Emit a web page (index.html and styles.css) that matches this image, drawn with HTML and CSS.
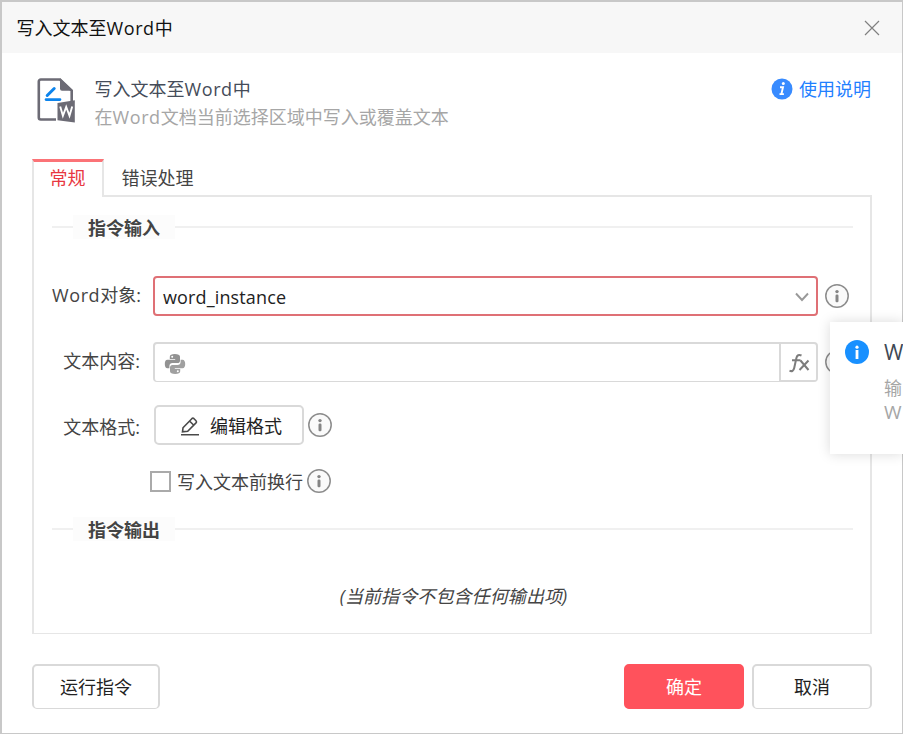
FILE: index.html
```html
<!DOCTYPE html>
<html lang="zh-CN">
<head>
<meta charset="utf-8">
<title>写入文本至Word中</title>
<link rel="stylesheet" href="styles.css">
</head>
<body>
<svg class="defs" aria-hidden="true">
  <symbol id="info" viewBox="0 0 24 24">
    <circle cx="12" cy="12" r="11.2" fill="#fafafa" stroke="#8c8c8c" stroke-width="1.5"/>
    <circle cx="12" cy="7.600" r="1.700" fill="#858585"/>
    <rect x="10.500" y="10.500" width="3" height="7.700" rx="1.200" fill="#858585"/>
  </symbol>
</svg>
<div class="window">
  <header class="titlebar">
    <span class="title">写入文本至<span class="latin">Word</span>中</span>
    <svg class="close" viewBox="0 0 16 16"><path d="M1 1l14 14M15 1L1 15" fill="none" stroke="#808080" stroke-width="1.2"/></svg>
  </header>

  <section class="intro">
    <svg class="doc-icon" viewBox="0 0 40 48">
      <path d="M20 42.500H4.800a2 2 0 0 1-2-2V4.500a2 2 0 0 1 2-2H24L35.700 13.500V26" fill="none" stroke="#6c6b75" stroke-width="2.600"/>
      <path d="M24 1.300L37 13.800H26a2 2 0 0 1-2-2z" fill="#6c6b75"/>
      <path d="M11.200 18.500l7-7" stroke="#0d84ec" stroke-width="3" stroke-linecap="round"/>
      <path d="M10 22.600h14" stroke="#0d84ec" stroke-width="2.600" stroke-linecap="round"/>
      <path d="M21.500 26L38.800 23.300v22.200l-17.300-2.300z" fill="#6c6b75"/>
      <path d="M24.200 29.500l2.700 9.300 3.300-8.800 3.300 8.800 2.700-9.300" fill="none" stroke="#fff" stroke-width="1.900"/>
    </svg>
    <div class="intro-text">
      <div class="name">写入文本至<span class="latin">Word</span>中</div>
      <div class="desc">在<span class="latin">Word</span>文档当前选择区域中写入或覆盖文本</div>
    </div>
    <a class="help">
      <svg viewBox="0 0 22 22"><circle cx="11" cy="11" r="10.500" fill="#388bff"/><circle cx="12.300" cy="5.500" r="1.500" fill="#fff"/><path d="M9 9.200h3l-1.600 6.900h2.500M8.500 16.100h2" fill="none" stroke="#fff" stroke-width="1.900"/></svg>
      <span>使用说明</span>
    </a>
  </section>

  <nav class="tabs">
    <div class="tab active">常规</div>
    <div class="tab">错误处理</div>
  </nav>

  <main class="panel">
    <h2 class="legend"><span>指令输入</span></h2>
    <div class="row row-object">
      <label><span class="latin">Word</span>对象:</label>
      <div class="select"><span class="value">word_instance</span>
        <svg viewBox="0 0 14 10"><path d="M1 1.500l6 6.500 6-6.500" fill="none" stroke="#999" stroke-width="1.900"/></svg>
      </div>
      <svg class="info"><use href="#info"/></svg>
    </div>
    <div class="row row-content">
      <label>文本内容:</label>
      <div class="input">
        <svg class="python" viewBox="0 0 22 22">
          <path d="M10.800 1c-3.200 0-5 .9-5 2.700V6h5.400v.8H3.500C1.700 6.800.8 8.300.8 11s1 4.300 2.600 4.300h2v-2.200c0-1.700 1.300-3 3-3h5.200c1.400 0 2.400-1 2.400-2.400v-4C16 1.900 14 1 10.800 1zM8.200 2.700a1 1 0 1 1 0 2 1 1 0 0 1 0-2z" fill="#929292"/>
          <path d="M11.200 21c3.200 0 5-.9 5-2.700V16h-5.400v-.8h7.700c1.800 0 2.700-1.500 2.700-4.200s-1-4.300-2.600-4.300h-2v2.200c0 1.700-1.300 3-3 3H8.400C7 11.900 6 12.900 6 14.300v4c0 1.800 2 2.700 5.200 2.700zm2.600-1.700a1 1 0 1 1 0-2 1 1 0 0 1 0 2z" fill="#a0a0a0"/>
        </svg>
        <div class="fx"><svg viewBox="0 0 22 20"><path d="M13.500 2.500c-2.700-1.300-4.500-.2-5.100 2.500L6.200 15c-.6 2.700-2.200 3.800-4.700 2.700M4 7.200h8.500M12.500 7.500l8 9.500M20.500 7.500l-9 9.500" fill="none" stroke="#7d7d7d" stroke-width="2"/></svg></div>
      </div>
      <svg class="info"><use href="#info"/></svg>
    </div>
    <div class="row row-format">
      <label>文本格式:</label>
      <button class="btn edit">
        <svg viewBox="0 0 20 20"><path d="M3 11.800L11.800 2.700a1.600 1.600 0 0 1 2.200 0l2 2a1.600 1.600 0 0 1 0 2.200L7.700 15.200l-5.200.6zM9.500 5l4.300 4.300M1 18.700h18" fill="none" stroke="#4a4a4a" stroke-width="1.600"/></svg>
        <span>编辑格式</span>
      </button>
      <svg class="info"><use href="#info"/></svg>
    </div>
    <div class="row row-check">
      <span class="checkbox"></span>
      <span class="check-label">写入文本前换行</span>
      <svg class="info"><use href="#info"/></svg>
    </div>
    <h2 class="legend"><span>指令输出</span></h2>
    <p class="empty">(当前指令不包含任何输出项)</p>
  </main>

  <footer class="footer">
    <button class="btn run">运行指令</button>
    <button class="btn primary">确定</button>
    <button class="btn cancel">取消</button>
  </footer>
</div>

<aside class="tip">
  <svg viewBox="0 0 24 24"><circle cx="12" cy="12" r="12" fill="#1890ff"/><circle cx="12" cy="7.200" r="1.600" fill="#fff"/><rect x="10.600" y="10" width="2.800" height="9" fill="#fff"/></svg>
  <div>
    <div class="tip-title">W</div>
    <div class="tip-text">输<br><span class="tip-latin">W</span></div>
  </div>
</aside>
</body>
</html>
```
FILE: styles.css
```css
* { box-sizing: border-box; }

body {
  margin: 0;
  width: 903px;
  height: 734px;
  position: relative;
  overflow: hidden;
  background: #fff;
  font: 18px/24px "Open Sans", "Noto Sans CJK SC", sans-serif;
  color: #444;
}

svg { display: block; flex: none; }
.defs { position: absolute; width: 0; height: 0; }
.latin { letter-spacing: .6px; }

.window {
  height: 734px;
  border: solid #c8c8c8;
  border-width: 2px 1px 1px 2px;
  background: #fff;
}

.titlebar {
  height: 51px;
  padding: 0 22px 0 14.5px;
  display: flex;
  align-items: center;
  justify-content: space-between;
  background: #f7f7f7;
  color: #111;
}
.close { width: 16px; height: 16px; }

.intro {
  height: 106px;
  padding: 24px 31px 0 34px;
  display: flex;
  align-items: flex-start;
}
.doc-icon { width: 40px; height: 48px; }
.intro-text { margin-left: 18.5px; line-height: 28px; margin-top: -2px; }
.name { color: #454c59; }
.desc { color: #a6a6a6; }
.help {
  margin-left: auto;
  display: flex;
  align-items: center;
  gap: 6px;
  color: #1f80ff;
}
.help svg { width: 22px; height: 22px; }

.tabs { height: 38px; margin: 0 30px; display: flex; position: relative; }
.tab { height: 36px; padding: 7px 18px 0 17.5px; }
.tab.active {
  height: 38px;
  width: 72px;
  padding: 4px 0 0 15.5px;
  border: solid #e6e6e6;
  border-width: 3px 2px 0;
  border-top-color: #fb7377;
  background: #fff;
  color: #e83741;
}

.panel {
  height: 439px;
  margin: -2px 30px 0;
  padding: 18px 17px 0 18px;
  border: solid #e6e6e6;
  border-width: 2px 2px 1px;
}

.legend {
  margin: 0;
  height: 24px;
  display: flex;
  align-items: center;
  font-size: 18px;
  line-height: 22px;
}
.legend::before, .legend::after { content: ""; height: 2px; background: #f0f0f0; }
.legend::before { width: 21px; }
.legend::after { flex: 1; }
.legend span { width: 102px; padding: 2px 0 0 15px; background: #fcfcfc; }

.row { display: flex; align-items: center; height: 40px; }
.row label { width: 89px; padding-right: 1px; margin-right: 12px; text-align: right; white-space: nowrap; }
.info { width: 24px; height: 24px; }
.row-object { margin-top: 37px; }
.row-content { margin-top: 26px; }
.row-format { margin-top: 23px; }
.row-check { height: 24px; margin: 24px 0 24px 98px; }
.row-object label, .row-content label { padding-bottom: 2px; }
.row-format label { padding-top: 3px; }
.row-object .info, .row-content .info { margin-left: 7px; }

.select, .input { width: 665px; height: 40px; border-radius: 4px; display: flex; align-items: center; }
.select {
  border: 2px solid #df7075;
  padding: 2px 7px 0 8px;
  justify-content: space-between;
  color: #222;
}
.value { letter-spacing: .14px; }
.select svg { width: 14px; height: 10px; }
.input { border: 2px solid #d9d9d9; border-bottom-width: 1px; padding-left: 9px; }
.python { width: 22px; height: 22px; margin-top: 3px; }
.fx {
  width: 37px;
  height: 37px;
  margin-left: auto;
  border-left: 2px solid #d9d9d9;
  border-bottom: 1px solid #d9d9d9;
  display: flex;
  align-items: center;
  justify-content: center;
}
.fx svg { width: 22px; height: 20px; margin-top: 2px; }

.btn {
  padding: 0;
  border: 2px solid #d9d9d9;
  border-radius: 5px;
  background: #fff;
  color: #222;
  font: inherit;
}
.edit {
  width: 150px;
  height: 40px;
  padding: 2px 0 0 4px;
  margin: 0 4px 0 1px;
  display: flex;
  align-items: center;
  justify-content: center;
  gap: 10px;
}
.edit svg { width: 20px; height: 20px; }
.checkbox { width: 21px; height: 21px; border: 2px solid #aaa; margin-right: 6px; }
.check-label { margin-right: 4px; padding-top: 2px; }
.empty { margin: 43px 0 0; padding-left: 2px; text-align: center; font-style: italic; letter-spacing: .1px; }

.footer { margin: 30px 30px 0; display: flex; gap: 8px; }
.footer .btn { width: 120px; height: 45px; border-bottom-width: 1px; }
.footer .run { width: 128px; margin-right: auto; }
.footer .primary { background: #ff525c; border-color: #ff525c; color: #fff; }

.tip {
  position: absolute;
  left: 830px;
  top: 322px;
  width: 73px;
  height: 132px;
  padding: 18px 0 0 15px;
  display: flex;
  gap: 15px;
  background: #fff;
  box-shadow: 0 0 12px rgba(0, 0, 0, .15);
}
.tip svg { width: 24px; height: 24px; }
.tip-title { font-size: 21px; color: #404854; }
.tip-text { margin-top: 12px; color: #a6a6a6; }
.tip-latin { font-size: 19px; }
```
